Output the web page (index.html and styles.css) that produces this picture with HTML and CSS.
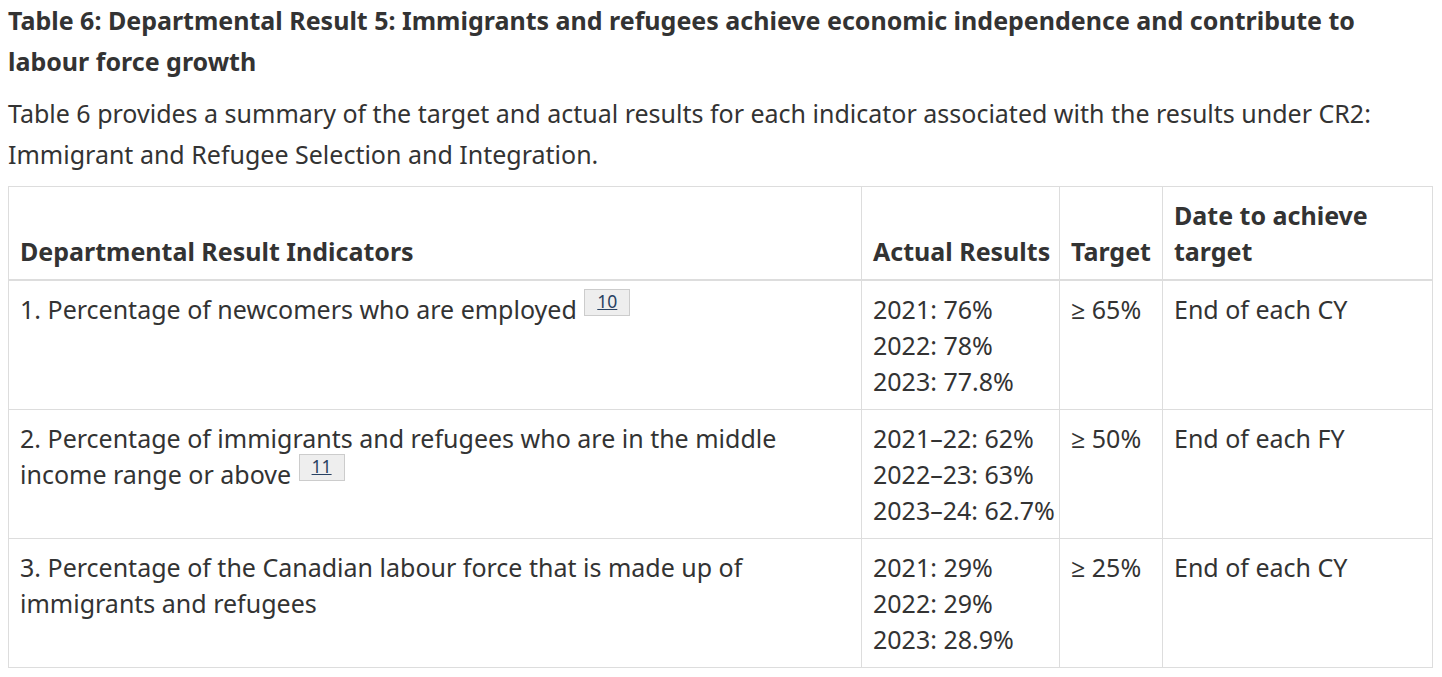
FILE: index.html
```html
<!DOCTYPE html>
<html lang="en">
<head>
<meta charset="utf-8">
<title>Table 6</title>
<link rel="stylesheet" href="styles.css">
</head>
<body>
<main class="page">
  <h4 class="table-title">Table 6: Departmental Result 5: Immigrants and refugees achieve economic independence and contribute to labour force growth</h4>
  <p class="intro">Table 6 provides a summary of the target and actual results for each indicator associated with the results under CR2: Immigrant and Refugee Selection and Integration.</p>
  <table class="results">
    <colgroup>
      <col class="c-ind">
      <col class="c-act">
      <col class="c-tgt">
      <col class="c-date">
    </colgroup>
    <thead>
      <tr>
        <th>Departmental Result Indicators</th>
        <th class="act">Actual Results</th>
        <th>Target</th>
        <th>Date to achieve target</th>
      </tr>
    </thead>
    <tbody>
      <tr>
        <td>1. Percentage of newcomers who are employed <sup class="fn"><a href="#fn10" class="fn-lnk">10</a></sup></td>
        <td class="act">2021: 76%<br>2022: 78%<br>2023: 77.8%</td>
        <td>≥ 65%</td>
        <td>End of each CY</td>
      </tr>
      <tr>
        <td>2. Percentage of immigrants and refugees who are in the middle income range or above <sup class="fn"><a href="#fn11" class="fn-lnk">11</a></sup></td>
        <td class="act">2021–22: 62%<br>2022–23: 63%<br>2023–24: 62.7%</td>
        <td>≥ 50%</td>
        <td>End of each FY</td>
      </tr>
      <tr>
        <td>3. Percentage of the Canadian labour force that is made up of immigrants and refugees</td>
        <td class="act">2021: 29%<br>2022: 29%<br>2023: 28.9%</td>
        <td>≥ 25%</td>
        <td>End of each CY</td>
      </tr>
    </tbody>
  </table>
</main>
</body>
</html>
```

FILE: styles.css
```css
html, body {
  margin: 0;
  padding: 0;
  background: #fff;
}
body {
  font-family: "Noto Sans", "Open Sans", sans-serif;
  color: #333;
  font-size: 25px;
}
.page {
  padding: 0 9px 0 8px;
}
.table-title {
  margin: 0 0 11px;
  font-size: 25px;
  font-weight: 700;
  line-height: 41px;
}
.intro {
  margin: 0 0 11px;
  line-height: 41px;
}
.results {
  width: 100%;
  table-layout: fixed;
  border-collapse: collapse;
  line-height: 36px;
}
.c-act { width: 198px; }
.c-tgt { width: 103px; }
.c-date { width: 270px; }
.results th,
.results td {
  border: 1px solid #ddd;
  padding: 10px 11px;
  text-align: left;
  vertical-align: top;
}
.results th {
  vertical-align: bottom;
  font-weight: 700;
  border-bottom: 2px solid #ddd;
}
.results .act {
  padding-right: 2px;
  white-space: nowrap;
}
.fn {
  display: inline-block;
  vertical-align: top;
  position: relative;
  top: -2px;
  margin-left: 1px;
  font-size: 17.5px;
  line-height: 21px;
}
.fn-lnk {
  display: block;
  background: #eee;
  border: 1px solid #ccc;
  padding: 1px 12px 3px;
  color: #284162;
  text-decoration: underline;
}
```
